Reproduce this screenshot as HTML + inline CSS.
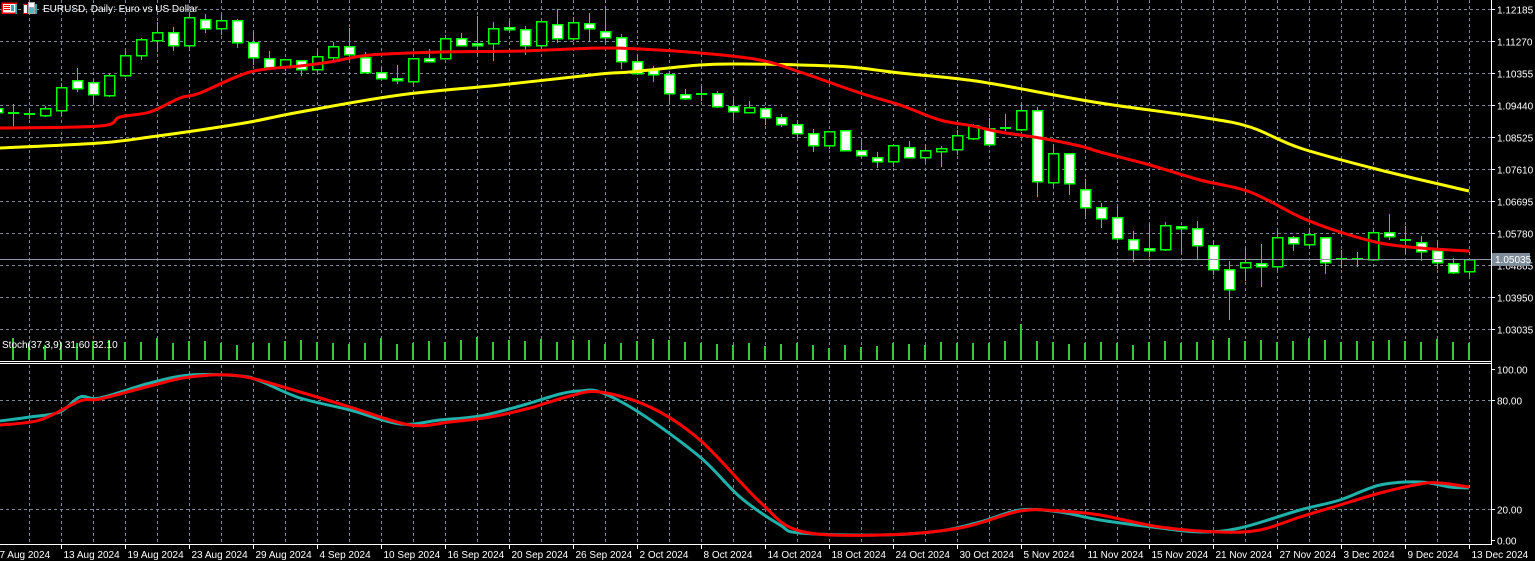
<!DOCTYPE html>
<html><head><meta charset="utf-8"><style>
html,body{margin:0;padding:0;background:#000;width:1535px;height:561px;overflow:hidden}
svg{display:block}
text{font-family:"Liberation Sans",sans-serif;font-size:10px;fill:#fff}
</style></head><body>
<svg id="s" width="1535" height="561" xmlns="http://www.w3.org/2000/svg" shape-rendering="crispEdges"></svg>
<script>
const s=document.getElementById('s');let h='';
const G='#778899';
for(let k=0;k<=45;k++){const x=29.5+32*k;h+=`<line x1="${x}" y1="0" x2="${x}" y2="360" stroke="${G}" stroke-dasharray="3,3"/>`;h+=`<line x1="${x}" y1="365" x2="${x}" y2="544" stroke="${G}" stroke-dasharray="3,3"/>`;}
const prices=["1.12185","1.11270","1.10355","1.09440","1.08525","1.07610","1.06695","1.05780","1.04865","1.03950","1.03035"];
for(let i=0;i<11;i++){const y=9.5+32*i;h+=`<line x1="0" y1="${y}" x2="1491" y2="${y}" stroke="${G}" stroke-dasharray="3,3"/>`;}
[400.5,509.5].forEach(y=>h+=`<line x1="0" y1="${y}" x2="1491" y2="${y}" stroke="${G}" stroke-dasharray="3,3"/>`);
const C=[[108,112,107,113,'w'],[112,114,104,126,'d'],[113,115,109,119,'d'],[108,115,106,117,'b'],[87,110,83,116,'b'],[80,88,68,92,'w'],[82,94,81,103,'w'],[75,95,74,97,'b'],[55,75,51,77,'b'],[39,55,38,60,'b'],[32,40,22,52,'b'],[32,45,27,51,'w'],[17,45,13,48,'b'],[19,28,14,33,'w'],[20,28,14,35,'b'],[20,42,19,48,'w'],[42,57,33,65,'w'],[58,67,51,68,'w'],[59,67,59,71,'b'],[60,69,60,76,'w'],[56,69,51,72,'b'],[46,57,42,60,'b'],[46,54,28,60,'w'],[57,72,52,73,'w'],[72,78,67,78,'w'],[78,80,65,84,'w'],[58,81,58,84,'b'],[58,61,49,61,'w'],[38,58,35,59,'b'],[38,45,33,46,'w'],[43,45,16,55,'w'],[28,43,22,61,'b'],[27,29,21,32,'w'],[29,45,26,55,'w'],[21,45,21,49,'b'],[24,38,9,43,'w'],[22,38,17,41,'b'],[23,28,13,42,'w'],[31,37,6,43,'w'],[37,61,34,69,'w'],[61,73,55,74,'w'],[69,74,66,82,'w'],[74,93,71,102,'w'],[94,98,89,100,'w'],[93,95,86,101,'d'],[93,106,91,108,'w'],[106,111,99,120,'w'],[107,112,101,113,'b'],[108,117,107,125,'w'],[117,124,114,127,'w'],[124,133,120,138,'w'],[133,145,129,152,'w'],[131,145,131,149,'b'],[130,150,130,151,'w'],[150,155,141,157,'w'],[157,161,152,168,'w'],[145,161,145,167,'b'],[147,157,141,158,'w'],[150,157,145,162,'b'],[148,151,146,167,'b'],[135,149,130,155,'b'],[125,138,124,140,'b'],[128,144,118,147,'w'],[127,129,114,131,'d'],[110,129,104,131,'b'],[110,181,107,197,'w'],[153,182,146,186,'b'],[153,183,153,195,'w'],[189,207,179,216,'w'],[207,218,203,228,'w'],[217,238,206,240,'w'],[239,249,231,262,'w'],[248,250,225,257,'w'],[225,249,222,251,'b'],[226,228,226,253,'w'],[228,245,221,259,'w'],[245,269,241,275,'w'],[269,289,261,320,'w'],[262,267,249,281,'b'],[263,266,244,287,'w'],[237,266,229,270,'b'],[237,243,236,251,'w'],[234,244,231,248,'b'],[237,262,237,274,'w'],[258,260,250,268,'d'],[258,260,252,267,'d'],[232,259,230,260,'b'],[232,236,214,240,'w'],[239,241,226,254,'d'],[242,251,236,261,'w'],[250,262,243,269,'w'],[263,272,258,274,'w'],[259,271,258,276,'b']];
const vol=[18,22,17,15,17,17,19,20,18,18,22,17,19,19,17,15,17,17,19,20,18,17,16,17,22,16,17,19,18,20,23,18,20,19,21,18,20,20,16,17,19,21,20,18,17,16,15,17,14,16,17,15,12,15,13,14,17,16,15,18,17,17,17,19,36,19,18,16,17,18,17,15,18,19,17,18,20,22,19,20,18,19,22,20,18,19,19,20,19,18,21,18];
C.forEach((c,i)=>{const cx=-3+16*i;const x=cx+0.5;
 h+=`<line x1="${x}" y1="${c[2]}" x2="${x}" y2="${c[3]}" stroke="#00ff00" stroke-width="1"/>`;
 if(c[4]=='d'){h+=`<rect x="${cx-5}" y="${c[0]}" width="11" height="2" fill="#00ff00"/>`;}
 else h+=`<rect x="${cx-5+0.5}" y="${c[0]+0.5}" width="10" height="${Math.max(2,c[1]-c[0])}" fill="${c[4]=='w'?'#fff':'#000'}" stroke="#00ff00" stroke-width="1.5"/>`;
 const v=vol[i]||17;h+=`<rect x="${cx-1}" y="${360-v}" width="2" height="${v}" fill="#32cd32"/>`;
});
const pl=(p,col,w)=>{let d=`M${p[0][0]},${p[0][1]}`;for(let i=0;i<p.length-1;i++){const p0=p[i-1]||p[i],p1=p[i],p2=p[i+1],p3=p[i+2]||p2;
 const c1=[p1[0]+(p2[0]-p0[0])/6,p1[1]+(p2[1]-p0[1])/6],c2=[p2[0]-(p3[0]-p1[0])/6,p2[1]-(p3[1]-p1[1])/6];
 d+=` C${c1[0].toFixed(1)},${c1[1].toFixed(1)} ${c2[0].toFixed(1)},${c2[1].toFixed(1)} ${p2[0]},${p2[1]}`;}
 return `<path d="${d}" fill="none" stroke="${col}" stroke-width="${w}" shape-rendering="auto"/>`;};
h+=pl([[0,148],[100,143],[150,137],[200,130],[250,122],[300,112],[400,95],[500,85],[600,74],[630,72],[700,65],[740,64],[800,65],[850,67],[900,73],[960,79],[1000,85],[1100,103],[1200,117],[1250,127],[1300,148],[1380,170],[1469,191]],'#ffff00',3);
h+=pl([[0,128],[100,126],[120,117],[150,112],[180,98],[200,93],[250,72],[300,66],[330,62],[370,55],[440,52],[520,51],[600,48],[640,49],[700,53],[760,60],[800,72],[860,93],[900,105],[940,120],[973,126],[1000,132],[1040,138],[1080,146],[1100,152],[1150,165],[1200,180],[1250,192],[1300,217],[1340,232],[1380,243],[1420,248],[1469,251]],'#ff0000',3);
h+=`<line x1="0" y1="259.5" x2="1491" y2="259.5" stroke="#8a96a3"/>`;
h+=pl([[0,421],[30,417],[60,412],[80,397],[100,398],[150,383],[190,375],[240,376],[260,381],[300,398],[350,410],[400,424],[440,420],[480,416],[520,406],[560,394],[580,391],[600,392],[640,413],[700,457],[740,497],[780,525],[800,533],[880,535],[940,531],[980,522],[1020,510],[1060,512],[1100,520],[1160,528],[1200,532],[1240,528],[1300,510],[1340,500],[1380,485],[1420,482],[1450,487],[1469,488]],'#20b2aa',3);
h+=pl([[0,425],[40,420],[80,401],[100,399],[150,386],[190,377],[240,376],[300,392],[350,407],[410,425],[450,422],[490,417],[530,408],[570,396],[600,392],[650,407],[700,440],[760,502],[800,531],[880,535],[960,528],[1020,511],[1060,511],[1100,515],[1160,527],[1220,532],[1260,530],[1300,517],[1340,505],[1380,493],[1420,484],[1440,483],[1469,487]],'#ff0000',3);
h+=`<line x1="0" y1="361.5" x2="1491" y2="361.5" stroke="#fff"/><line x1="0" y1="363.5" x2="1491" y2="363.5" stroke="#fff"/>`;
h+=`<line x1="1491.5" y1="0" x2="1491.5" y2="545" stroke="#fff"/><line x1="0" y1="544.5" x2="1492" y2="544.5" stroke="#fff"/>`;
prices.forEach((p,i)=>{const y=9.5+32*i;h+=`<line x1="1491" y1="${y}" x2="1495" y2="${y}" stroke="#fff"/><text x="1497" y="${y+4}">${p}</text>`;});
h+=`<rect x="1492" y="253" width="38" height="13" fill="#7f8c99"/><text x="1495" y="263">1.05035</text>`;
[["100.00",369.5],["80.00",400.5],["20.00",509.5],["0.00",540.5]].forEach(a=>{h+=`<line x1="1491" y1="${a[1]}" x2="1495" y2="${a[1]}" stroke="#fff"/><text x="1497" y="${a[1]+4}">${a[0]}</text>`;});
const d=["7 Aug 2024","13 Aug 2024","19 Aug 2024","23 Aug 2024","29 Aug 2024","4 Sep 2024","10 Sep 2024","16 Sep 2024","20 Sep 2024","26 Sep 2024","2 Oct 2024","8 Oct 2024","14 Oct 2024","18 Oct 2024","24 Oct 2024","30 Oct 2024","5 Nov 2024","11 Nov 2024","15 Nov 2024","21 Nov 2024","27 Nov 2024","3 Dec 2024","9 Dec 2024","13 Dec 2024"];
d.forEach((t,i)=>{const x=-2.5+64*i;h+=`<line x1="${x}" y1="545" x2="${x}" y2="549" stroke="#fff"/><text x="${x+2}" y="558">${t}</text>`;});
h+=`<text x="2" y="348">Stoch(37,3,9) 31.60 32.10</text>`;
// icons
h+=`<rect x="2" y="3" width="14" height="10" fill="#fff"/><rect x="2" y="3" width="14" height="10" fill="none" stroke="#e00" stroke-width="1.5"/><rect x="4" y="5" width="6" height="1" fill="#e00"/><rect x="4" y="7" width="6" height="1" fill="#e00"/><rect x="4" y="9" width="6" height="1" fill="#e00"/><rect x="11" y="5" width="3" height="6" fill="#3aa"/><rect x="16" y="4" width="1" height="10" fill="#3aa"/>`;
h+=`<rect x="23" y="4" width="5" height="10" fill="#e00"/><rect x="24" y="5" width="3" height="8" fill="#fff"/><rect x="28" y="2" width="7" height="12" fill="#aaa"/><rect x="29" y="3" width="5" height="4" fill="#fff"/><rect x="29" y="8" width="5" height="5" fill="#5bb"/><rect x="35" y="4" width="2" height="10" fill="#3aa"/>`;
h+=`<text x="43" y="12">EURUSD, Daily:  Euro vs US Dollar</text>`;
s.innerHTML=h;
</script>
</body></html>
